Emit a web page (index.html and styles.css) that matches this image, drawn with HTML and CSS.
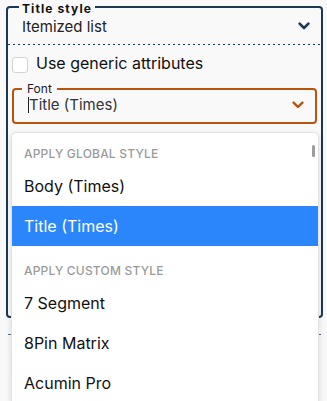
FILE: index.html
```html
<!DOCTYPE html>
<html>
<head>
<meta charset="utf-8">
<link rel="stylesheet" href="styles.css">
</head>
<body>
<fieldset class="group">
  <legend class="group-legend">Title style</legend>
  <div class="select-row">
    <span class="select-value">Itemized list</span>
    <svg class="chev chev-dark" width="12" height="8" viewBox="0 0 12 8"><path d="M1.6 1.6 L6 6 L10.4 1.6" fill="none" stroke="currentColor" stroke-width="2.6" stroke-linecap="round" stroke-linejoin="round"/></svg>
  </div>
  <div class="divider"></div>
  <label class="check-row"><span class="checkbox"></span><span class="check-label">Use generic attributes</span></label>
  <fieldset class="field">
    <legend class="field-legend">Font</legend>
    <div class="field-row">
      <span class="field-value"><span class="caret"></span>Title (Times)</span>
      <svg class="chev chev-orange" width="12" height="8" viewBox="0 0 12 8"><path d="M1.6 1.6 L6 6 L10.4 1.6" fill="none" stroke="currentColor" stroke-width="2.4" stroke-linecap="round" stroke-linejoin="round"/></svg>
    </div>
  </fieldset>
  <div class="group-spacer"></div>
</fieldset>
<div class="next"><div class="next-bar"></div></div>

<div class="menu">
  <div class="scroll-thumb"></div>
  <div class="menu-header first">Apply global style</div>
  <div class="menu-item">Body (Times)</div>
  <div class="menu-item selected">Title (Times)</div>
  <div class="menu-header">Apply custom style</div>
  <div class="menu-item">7 Segment</div>
  <div class="menu-item">8Pin Matrix</div>
  <div class="menu-item">Acumin Pro</div>
</div>
</body>
</html>
```
FILE: styles.css
```css
html, body {
  margin: 0;
  padding: 0;
  background: #f9f9f9;
  font-family: Inter, "Noto Sans", sans-serif;
  color: #111;
  overflow: hidden;
}

body {
  position: relative;
  width: 327px;
  height: 401px;
}

.group {
  margin: 0 4px 0 6px;
  padding: 0;
  min-width: 0;
  border: 2px solid #1b3955;
  border-radius: 4px;
}

.group-legend {
  margin-left: 11px;
  padding: 4px 3px 0;
  font-size: 12px;
  line-height: 10px;
  font-weight: 700;
  letter-spacing: 1.1px;
  color: #111;
}

.select-row {
  display: flex;
  align-items: center;
  justify-content: space-between;
  padding: 3px 11px 7px 14px;
}

.select-value {
  font-size: 15px;
  line-height: 20px;
  color: #222;
}

.chev {
  display: block;
  flex: none;
}

.chev-dark {
  color: #1b3955;
  margin-top: -2px;
}

.chev-orange {
  color: #b8540c;
}

.divider {
  height: 1px;
  background: repeating-linear-gradient(to right, #1b3955 0 2px, transparent 2px 5px);
}

.check-row {
  display: flex;
  align-items: flex-start;
  gap: 8px;
  padding: 8px 0 0 4px;
}

.checkbox {
  flex: none;
  width: 14px;
  height: 14px;
  margin-top: 4px;
  border: 1px solid #d4d4d4;
  border-radius: 3px;
  background: #fff;
}

.check-label {
  font-size: 16px;
  line-height: 20px;
  color: #111;
}

.field {
  margin: 10px 4px 0 4px;
  padding: 0;
  min-width: 0;
  border: 2px solid #b8540c;
  border-radius: 4px;
}

.field-legend {
  margin-left: 8px;
  padding: 0 5px;
  font-size: 12px;
  line-height: 12px;
  color: #222;
}

.field-row {
  display: flex;
  align-items: center;
  justify-content: space-between;
  padding: 0 11px 7px 14px;
}

.field-value {
  display: flex;
  align-items: center;
  font-size: 15px;
  line-height: 20px;
  color: #333;
}

.caret {
  width: 1px;
  height: 16px;
  margin-right: 0;
  background: #222;
}

.group-spacer {
  height: 192px;
}

.next {
  margin: 16px 6px 0 8px;
  border-top: 1px solid #5d6e80;
  height: 50px;
}

.next-bar {
  width: 2px;
  height: 13px;
  margin: 25px 0 0 3px;
  background: #8a3f0c;
}

.menu {
  position: absolute;
  top: 132px;
  left: 11px;
  width: 306px;
  height: 272px;
  background: #fff;
  border: 1px solid #e2e2e2;
  border-radius: 5px;
  box-shadow: 0 2px 6px rgba(0, 0, 0, 0.12);
  overflow: hidden;
}

.scroll-thumb {
  position: absolute;
  top: 12px;
  right: 3px;
  width: 3px;
  height: 12px;
  border-radius: 1.5px;
  background: #9c9c9c;
}

.menu-header {
  padding: 17px 12px 4px;
  font-size: 12px;
  line-height: 16px;
  font-weight: 500;
  letter-spacing: 0.2px;
  text-transform: uppercase;
  color: #9a9a9a;
}

.menu-header.first {
  padding-top: 13px;
}

.menu-item {
  padding: 0 12px;
  height: 40px;
  font-size: 16px;
  line-height: 40px;
  color: #111;
}

.menu-item.selected {
  background: #2b86fc;
  color: #fff;
}
```
